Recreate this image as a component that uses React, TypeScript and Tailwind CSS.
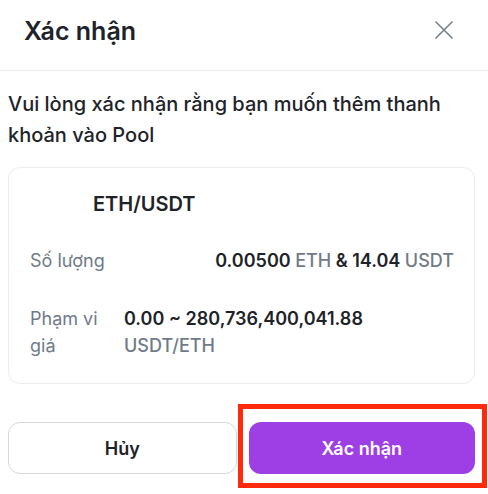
export default function App() {
  return (
    <div className="min-h-[494px] w-full bg-white font-['Inter','Noto_Sans',sans-serif] text-[#1e2329]">
      {/* header */}
      <div className="flex h-[71px] items-start justify-between border-b border-[#eaecef] pl-6 pr-[34px] pt-[15px]">
        <h1 className="text-[25px] font-semibold leading-[32px]">Xác nhận</h1>
        <button className="mt-[5px] text-[#76808f]">
          <svg width="20" height="20" viewBox="0 0 20 20" fill="none" stroke="currentColor" strokeWidth="1.6">
            <path d="M1.5 1.5 18.5 18.5M18.5 1.5 1.5 18.5" />
          </svg>
        </button>
      </div>

      <div className="pl-2 pr-[13px]">
        <p className="mt-[18px] text-[20px] font-medium leading-[31px]">
          Vui lòng xác nhận rằng bạn muốn thêm thanh khoản vào Pool
        </p>

        {/* card */}
        <div className="mt-[16px] rounded-xl border border-[#eaecef] pb-[24px] pl-[21px] pr-[20px] pt-[22px]">
          <div className="flex items-center">
            <div className="h-7 w-[63px] shrink-0" />
            <div className="text-[20px] font-semibold leading-[28px]">ETH/USDT</div>
          </div>

          <div className="mt-[29px] flex justify-between text-[18px] leading-[27px]">
            <span className="text-[#707a8a]">Số lượng</span>
            <span className="font-semibold">
              0.00500 <span className="font-medium text-[#707a8a]">ETH</span> &amp; 14.04{" "}
              <span className="font-medium text-[#707a8a]">USDT</span>
            </span>
          </div>

          <div className="mt-[31px] flex text-[18px] leading-[27px]">
            <span className="w-[94px] shrink-0 pr-3 text-[#707a8a]">Phạm vi giá</span>
            <div>
              <div className="font-semibold">0.00 ~ 280,736,400,041.88</div>
              <div className="font-medium text-[#707a8a]">USDT/ETH</div>
            </div>
          </div>
        </div>

        {/* actions */}
        <div className="mt-[38px] flex gap-3">
          <button className="h-[52px] flex-1 rounded-xl border border-[#d5d8dc] bg-white text-[18px] font-semibold">
            Hủy
          </button>
          <div className="relative flex-1">
            <button className="h-[52px] w-full rounded-xl bg-[#9e3fe6] text-[18px] font-semibold text-white">
              Xác nhận
            </button>
            <div className="pointer-events-none absolute -bottom-[14px] -left-[11px] -right-[12px] -top-[18px] border-[5px] border-[#ff2a0c]" />
          </div>
        </div>
      </div>
    </div>
  );
}
